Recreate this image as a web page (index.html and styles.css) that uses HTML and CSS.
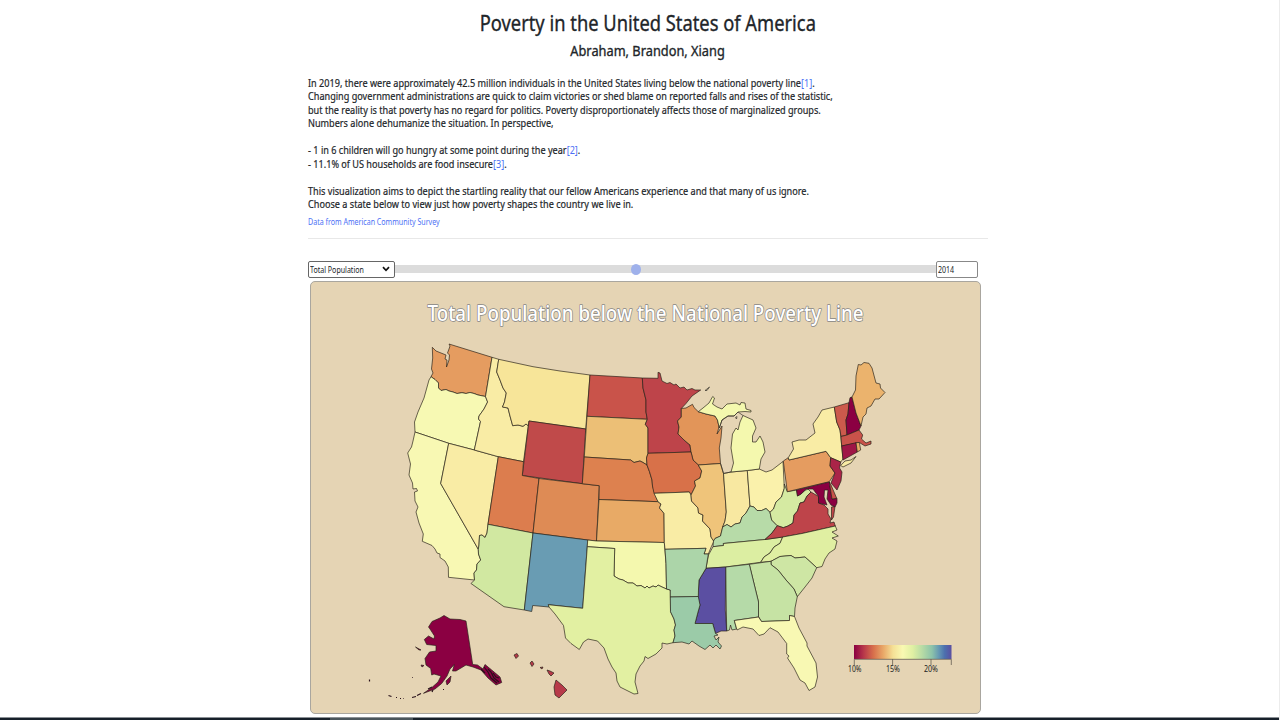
FILE: index.html
```html
<!DOCTYPE html>
<html lang="en">
<head>
<meta charset="utf-8">
<title>Poverty in the United States of America</title>
<link rel="stylesheet" href="styles.css">
</head>
<body>
<main class="page">
  <h1 class="title">Poverty in the United States of America</h1>
  <h2 class="authors">Abraham, Brandon, Xiang</h2>
  <div class="intro">In 2019, there were approximately 42.5 million individuals in the United States living below the national poverty line<a>[1]</a>.<br>Changing government administrations are quick to claim victories or shed blame on reported falls and rises of the statistic,<br>but the reality is that poverty has no regard for politics. Poverty disproportionately affects those of marginalized groups.<br>Numbers alone dehumanize the situation. In perspective,<br><br>- 1 in 6 children will go hungry at some point during the year<a>[2]</a>.<br>- 11.1% of US households are food insecure<a>[3]</a>.<br><br>This visualization aims to depict the startling reality that our fellow Americans experience and that many of us ignore.<br>Choose a state below to view just how poverty shapes the country we live in.</div>
  <a class="source">Data from American Community Survey</a>
  <hr class="rule">
  <div class="controls">
    <div class="select"><span class="small-text">Total Population</span><svg class="chevron" viewBox="0 0 8 6"><path d="M1 1.2 4 4.3 7 1.2"/></svg></div>
    <div class="slider"><span class="thumb"></span></div>
    <div class="year"><span class="small-text">2014</span></div>
  </div>
  <section class="map-card">
    <svg class="map" viewBox="311 282 669 431">
      <defs>
        <linearGradient id="ramp"><stop offset="0" stop-color="#8b0042"/><stop offset=".1" stop-color="#b8384a"/><stop offset=".2" stop-color="#d8704c"/><stop offset=".3" stop-color="#e9a868"/><stop offset=".4" stop-color="#f5e096"/><stop offset=".5" stop-color="#f9f9b2"/><stop offset=".6" stop-color="#e0f0a3"/><stop offset=".7" stop-color="#b7dba5"/><stop offset=".8" stop-color="#8cc3aa"/><stop offset=".87" stop-color="#6699b3"/><stop offset=".93" stop-color="#4c70ae"/><stop offset="1" stop-color="#5b4fa2"/></linearGradient>
      </defs>
      <text class="map-title" x="427.5" y="320.5" textLength="436" lengthAdjust="spacingAndGlyphs">Total Population below the National Poverty Line</text>
      <g class="states">
        <path id="WA" fill="#e59c60" d="M432.3 347.3 436 351 441 353 446 355 445 359 447 360 446.500 367 449 360 449.500 355 447.500 353 449 349 450 346 449 344 492 357.300 485.500 396.500 478 395 474 393.500 470 392.500 466 393.500 462 392.700 457 393.500 453 392 449 391 446 389.500 441 390.500 438.500 388 438.500 383 435 379.500 431 376.700 433 373 431.500 369 432.700 358Z"/>
        <path id="OR" fill="#f7f9b3" d="M431 376.700 435 379.500 438.500 383 438.500 388 441 390.500 446 389.500 449 391 453 392 457 393.500 462 392.700 466 393.500 470 392.500 474 393.500 478 395 485.500 396.500 487.600 402 484 409 479 416 478.500 419 480.500 421.500 474.300 450 448.700 443.300 415 432 414.500 422 418 412 424 398 429 380Z"/>
        <path id="CA" fill="#f8f8b3" d="M415 432 448.700 443.300 440.700 483.500 478.300 549.300 478.500 554 480.700 560 477 564 476.500 570 474 573 474.500 580 448.500 577.300 448.300 567 445 561 440 557.500 440 554 437 553 435 549 432 545.500 422.300 541.300 423.300 534 419 523 416 512 418 507 415 501 414.500 492 417.500 491 416.500 488.500 413 489 412.500 483 409 475 410.500 464 407.700 453 411.500 447 413 441Z"/>
        <path id="NV" fill="#f9eca5" d="M448.700 443.300 474.300 450 498.300 456.700 488 524.300 487 533 485 537.500 482 535 479.500 535.500 479 545 478.300 549.300 440.700 483.500Z"/>
        <path id="ID" fill="#f9eca5" d="M492 357.300 498.700 359.300 496.700 372 500 380 503 388 506.300 393 504.500 402 502.500 407 508 408 510 416 512.700 425.700 518 425 523 426.300 526 424 528.300 425.700 523.500 461.700 498.300 456.700 474.300 450 480.500 421.500 478.500 419 479 416 484 409 487.600 402 485.500 396.500Z"/>
        <path id="MT" fill="#f7e599" d="M498.700 359.300 533 366.700 560 371 590 375 585.700 429 529 421 528.300 425.700 526 424 523 426.300 518 425 512.700 425.700 510 416 508 408 502.500 407 504.500 402 506.300 393 503 388 500 380 496.700 372Z"/>
        <path id="WY" fill="#c04a4a" d="M529 421 585.700 429 582.300 483.700 522.300 475.500Z"/>
        <path id="UT" fill="#dc7d4e" d="M498.300 456.700 523.500 461.700 522.300 475.500 539 478.500 533 533 488 524.300Z"/>
        <path id="CO" fill="#de8b55" d="M539 478.500 582.300 483.700 599.300 485.700 596.500 541 587.700 540 533 533Z"/>
        <path id="AZ" fill="#d1e8a1" d="M488 524.300 533 533 524.300 610 504 606.700 471 583.500 474.500 580 474 573 476.500 570 477 564 480.700 560 478.500 554 478.300 549.300 479 545 479.500 535.500 482 535 485 537.500 487 533Z"/>
        <path id="NM" fill="#699cb3" d="M533 533 587.700 540 582.700 608.300 548.300 604.700 549 607 532.700 605.500 531.700 611.500 524.300 610Z"/>
        <path id="ND" fill="#c9534a" d="M590 375 642.300 378 643 388 646 400 646 412 647.300 419.300 587 416.300Z"/>
        <path id="SD" fill="#ecbf76" d="M587 416.300 647.300 419.300 645.300 424.300 648 428 648 453.300 646.500 458 647 465 643 462.500 640 461 634 462.500 630.700 460 584.300 457Z"/>
        <path id="NE" fill="#dd814f" d="M584.300 457 630.700 460 634 462.500 640 461 643 462.500 647 465 649.500 471.700 652 480 652.500 486 655 494 658 501.700 599 499.500 599.300 485.700 582.300 483.700Z"/>
        <path id="KS" fill="#e8aa66" d="M599 499.500 658 501.700 661 504 659.500 508 664 513.300 664.300 542.500 596.500 541Z"/>
        <path id="OK" fill="#f4f8ae" d="M587.700 540 596.500 541 664.300 542.500 666 563.500 666.500 589 662 587 658 585 656 587 653 586 649 588 647 586 645 588 641 585.500 637 586 633 583 628 583 623 580 619 579 614 576 614.700 548.500 587.300 546.700Z"/>
        <path id="TX" fill="#e2f0a2" d="M587.300 546.700 614.700 548.500 614 576 619 579 623 580 628 583 633 583 637 586 641 585.500 645 588 647 586 649 588 653 586 656 587 658 585 662 587 666.500 589 670.300 590 670.500 611.700 674 619 675.500 625 674 630 675 636 673 642.700 667 644 662 643 662 648 656 654 648 658.500 645 656.500 644 661 640 666 636 674 635 682 638 693.500 634 694 628 691 620 687 617 681 616 673 612 667 608 659 604 648 597.500 641 588 639 583.500 642 579.300 649.500 571 643.500 565.500 638 563.500 625.500 555 614 549 607 548.300 604.700 582.700 608.300Z"/>
        <path id="MN" fill="#be444a" d="M642.300 378 658 378.300 658 372.300 660 373 662 381 667 383.500 670 382.500 674 385 676 384 680 388 684 387 687 390 692 388.500 695 390 700.700 390 692 396 686 403.500 681.300 408.500 681.300 417 677.500 421 679 427 678 434 684 440 690 445 691 452 648 453.300 648 428 645.300 424.300 647.300 419.300 646 412 646 400 643 388Z"/>
        <path id="WI" fill="#e29559" d="M681.300 408.500 686 408 692.500 404.300 694 407.500 698.300 411.700 706 414 715 416 717.500 420 719 427 717 434 722 426 721 438 719.300 448 720.500 463.500 698.300 465 693 460 691 452 690 445 684 440 678 434 679 427 677.500 421 681.300 417Z"/>
        <path id="IA" fill="#d87149" d="M648 453.300 691 452 693 460 698.300 465 701.700 471 700 478 694.500 481 695.500 486 693 491 691 495 689.300 492 654 493.300 652.500 486 652 480 649.500 471.700 647 465 646.500 458Z"/>
        <path id="MO" fill="#f9eca5" d="M654 493.300 689.300 492 691 495 691.500 501 698 508 698.500 513 703 515 702.500 521 710 529 711 537 714 541 711.300 546.700 708.300 554 704 554 706 548.300 665 549.300 664.300 542.500 664 513.300 659.500 508 661 504 658 501.700Z"/>
        <path id="IL" fill="#efc47a" d="M698.300 465 720.500 463.500 723.500 473.500 726.300 512 725 521 722.700 527 720.500 536 715 538.500 713.500 541 711 537 710 529 702.500 521 703 515 698.500 513 698 508 691.500 501 691 495 693 491 695.500 486 694.500 481 700 478 701.700 471Z"/>
        <path id="IN" fill="#f8e8a1" d="M723.500 473.500 731 472 747.300 470.500 750 506 746 513 742 517 740 523 735 524 731 527 727 524.500 722.700 527 725 521 726.300 512Z"/>
        <path id="OH" fill="#faf1ab" d="M747.300 470.500 759.300 469 766 472 772 470 783 461.500 784.300 488.300 781.500 497 776 502 773.500 509 770 512.300 766 508.500 761.700 510.500 757 510.500 754 507 750 506Z"/>
        <path id="KY" fill="#b7dba8" d="M750 506 754 507 757 510.500 761.700 510.500 766 508.500 770 512.300 771.700 520 777.300 525.700 772 533 765 539.500 723.300 543.500 723.500 545.500 713 546.700 713.500 541 715 538.500 720.500 536 722.700 527 727 524.500 731 527 735 524 740 523 742 517 746 513Z"/>
        <path id="TN" fill="#dceea2" d="M713 546.700 723.500 545.500 723.300 543.500 765 539.500 782.700 537 780 543.300 774 547 770 553 764 557 760.700 562.300 725.700 567 706 568.300 708.500 555Z"/>
        <path id="WV" fill="#d5eaa2" d="M784.300 484 787.300 491.700 796.500 490 797.500 496 801 494 805 490.500 808 489 811 492 807 496 804 502 800 503 797.500 511 794 515 793 523 788 526 783.300 527.700 777.300 525.700 771.700 520 770 512.300 773.500 509 776 502 781.500 497 784.300 488.300Z"/>
        <path id="VA" fill="#be444a" d="M811 492 818.500 496.500 818.500 503 824 505 828 509 828 514 831 519 830 523 834 522 835.300 526 802 533.500 782.700 537 765 539.500 772 533 777.300 525.700 783.300 527.700 788 526 793 523 794 515 797.500 511 800 503 804 502 807 496ZM831.500 507 835 506.500 833.500 517 831.500 520Z"/>
        <path id="NC" fill="#e0efa2" d="M782.700 537 802 533.500 835.300 526 837 530 832 532 838.300 536 832 538 837 541 835 549 829 553 825 559 822 566.500 816.700 567.700 805 557 795 558 791 555.500 780 556.500 771 561.300 760.700 562.300 764 557 770 553 774 547 780 543.300Z"/>
        <path id="SC" fill="#cee6a4" d="M771 561.300 780 556.500 791 555.500 795 558 805 557 816.700 567.700 812 578 805 587 797.300 596.700 794 589 786 580 778 570 771 564.500Z"/>
        <path id="GA" fill="#c6e3a4" d="M749.300 564.300 771 561.300 771 564.500 778 570 786 580 794 589 797.300 596.700 795 608 794.500 616.500 789.500 615.500 789.500 620.500 761.500 621.500 758.500 616.500 758.500 602Z"/>
        <path id="AL" fill="#b5daa8" d="M725.700 567 749.300 564.300 758.500 602 758.500 617 734.300 620.500 736.500 629 732 630 730.500 625 729.500 630 726.700 631Z"/>
        <path id="MS" fill="#5b4fa2" d="M706 568.300 725.700 567 725.300 610 726.700 631 721 631 715.500 633.500 712.700 623.500 695 623.500 698 612 700 605 698 598 698.500 589 699 580Z"/>
        <path id="AR" fill="#acd5a9" d="M665 549.300 706 548.300 704 554 708.300 554 706 568.300 699 580 698.500 589 698.300 596.500 670.300 597 670.300 590 666.500 589 666 563.500Z"/>
        <path id="LA" fill="#9bcba8" d="M670.300 597 698.300 596.500 700 605 698 612 695 623.500 712.700 623.500 715.500 633.500 718 635 714 636 716 640 719 637 718 642 721.500 646 720 649 716 645 713 648 710 645 705 649.500 699 646 692 641 689 644 682 642 673 642.700 675 636 674 630 675.500 625 674 619 670.500 611.700Z"/>
        <path id="FL" fill="#f8f8b3" d="M734.300 620.500 758.500 617 761.500 621.500 789.500 620.500 789.500 615.500 794.500 616.500 799 628 807 643 807 646 816 663 817.500 677 815 687 809 690.500 805 683 800 680 795 670 794 668 787.500 658 789 656 786.700 654 786.700 643.500 778 632 770 627.700 764 634 759 635.500 753 629 743 627 737 630Z"/>
        <path id="MI" fill="#f4f8ae" d="M731 472 733.500 463 731 448 732.500 434 736 428 738 430 740 422 743 415.500 753 420 756 428 752.500 436 752.500 442 756 442 760 436 763 442 765 452 761 459 759.300 469 747.300 470.500ZM698.300 411.700 703 408 709 403 712.700 396.500 714.500 398 712.500 404 717 407 722 409 727 404 736 403 740 405 741 402.500 745 403 746 409 751 410.500 751 412 745 411.500 738 412 734 416 728 416 722 420 719.300 428 717.500 420 715 416 706 414Z"/>
        <path id="PA" fill="#e59c60" d="M783.300 461 788.300 457.700 789 460 826 451.300 830.700 457.700 830 466 835 473 829.300 481.700 787.300 491.700Z"/>
        <path id="NY" fill="#f9eca5" d="M788.300 457.700 793.500 449 792 442 799 440 806 440 815 433 813 424 818 417 822 410 834.300 407 836.700 422 840 430 841.700 446 843 459 840.700 462 830.700 457.700 826 451.300 789 460ZM840.700 465.500 845 461 851 460 856 456.500 851 463 843 467Z"/>
        <path id="VT" fill="#cc5a4c" d="M834.300 407 849 402.700 848 414 846 420 847 435 841 436.500 840 430 836.700 422Z"/>
        <path id="NH" fill="#8b0042" d="M849 402.700 850 397.700 852 397 856 413 861 426 859 430 847 435 846 420 848 414Z"/>
        <path id="ME" fill="#ebb36d" d="M852 397 855.500 390 856 376 858.300 364.500 861 365 864 362.500 869 363.300 872 368 876 383 880 384 880.500 388 885 392.500 879 399 875 399 871 406 867 408 866 414 863 417 861 426 856 413Z"/>
        <path id="MA" fill="#c9534a" d="M841 436.500 847 435 859 430 862.700 435 861.500 439 866 443 871 441 871 444 865 446 859.300 442.500 841.700 446Z"/>
        <path id="CT" fill="#9f1646" d="M841.700 446 856 442.700 857.300 452 843 460Z"/>
        <path id="RI" fill="#e9ac66" d="M856 442.700 859.300 442.500 860.700 450 857.300 452Z"/>
        <path id="NJ" fill="#aa2448" d="M830.700 457.700 840.700 462 839.500 468 842 472 841 481 837 490 831 483 835 473 830 466Z"/>
        <path id="MD" fill="#8b0042" d="M796.500 490 829.300 482 832 499 837 498.300 837 503 835 507 831 505 827 499 828 490 824.500 490 824 497 827 505 818.500 503 818.500 496.500 813 489 806 489 801 494 797.500 496Z"/>
        <path id="DE" fill="#c9534a" d="M829.300 482 831 485 836.700 498.300 832 499Z"/>
        <path id="AK" fill="#8b0042" d="M428.500 627 432 621.500 440 618 444 615.500 450 619 460 619.500 466 621 472.700 664.500 477.500 665 483 669 485 664.500 491.700 670 500 677 501.700 682.500 496 685 488 678 481 670 473 667 466 665 461 668 456 671 452.500 671 454.300 664.500 450 669 447 676 441.700 683.500 435 689 423.500 693.300 431.700 687.700 438 682 441 676 434 674 431.700 675 430.700 668.500 426 665 425 658.500 429.500 652 436 651 436 645.500 426.700 644.500 424.300 639.500 428.500 636 434 639 434.500 636 430 629ZM446 681 451 676 450 682 447 685ZM415.500 647 421 650 419 650ZM421 665 424 665.500 422 667Z"/>
        <path id="HI" fill="#b73a49" d="M514 655 517 653.500 518.500 656 516 658.500ZM530 663 532 661 534 664 532 666.500ZM540 667.500 543 667 542 669ZM547 670 550 671 554 673 551 676 549 674ZM556 680 562 685 567 690 559 698 555 695 554 687Z"/>
      </g>
      <path class="islands" d="M369.500 679.500v2M412 677.500h.7M388.500 695.500l3 1M396 697.500h1M400 698.500h1M403 698.500h.6M412 697.500l4-1M417 695.500l4-2M443 689.500h1M428 689l4-2M432 692l1-2M484 667l4 5 3 6 6 5M488 669l3 3 3 6 5 4M493 673l3 4 3 1M481 669l4 4"/>
      <path class="shore" d="M705 390.500 709.500 387 707 390.500ZM735.500 417.500 737 416.500 736.500 419ZM720.500 463.500 723.500 473.500 731 472M719.300 428 722 420 728 416 734 416 738 412M738 412 743 415.500"/>
      <rect x="854" y="645" width="97.500" height="14" fill="url(#ramp)"/>
      <path class="axis" d="M854.300 665v-5.700h97v5.700M892.600 659v6M931 659v6"/>
      <g class="ticks"><text x="848" y="671.500" textLength="13.500" lengthAdjust="spacingAndGlyphs">10%</text><text x="886" y="671.500" textLength="14" lengthAdjust="spacingAndGlyphs">15%</text><text x="924" y="671.500" textLength="14" lengthAdjust="spacingAndGlyphs">20%</text></g>
    </svg>
  </section>
</main>
<div class="taskbar"><span class="task"></span></div>
</body>
</html>
```
FILE: styles.css
```css
* { box-sizing: border-box; }
body {
  margin: 0;
  height: 720px;
  overflow: hidden;
  display: flex;
  flex-direction: column;
  justify-content: space-between;
  background: #fff;
  border-right: 1px solid #ececec;
  color: #212529;
  font-family: "Noto Sans", "Open Sans", sans-serif;
}
.page {
  width: 680px;
  margin-left: 308px;
  display: flex;
  flex-direction: column;
  align-items: flex-start;
}
.title, .authors {
  margin: 0;
  align-self: center;
  font-weight: 400;
  white-space: nowrap;
  -webkit-text-stroke: .35px #212529;
}
.title { margin-top: 8px; font-size: 22px; line-height: 29px; transform: scaleX(.833); }
.authors { margin-top: 4px; font-size: 15px; line-height: 18px; transform: scaleX(.853); }
.intro {
  margin-top: 18px;
  font-size: 10.6px;
  line-height: 13.45px;
  white-space: nowrap;
  transform: scaleX(.86);
  transform-origin: 0 0;
  -webkit-text-stroke: .2px currentColor;
}
a { color: #4b70f5; }
.intro a { -webkit-text-stroke: 0; }
.source {
  margin-top: 4px;
  font-size: 8.6px;
  line-height: 13px;
  transform: scaleX(.823);
  transform-origin: 0 0;
}
.rule { width: 680px; height: 1px; margin: 9px 0 0; border: 0; background: #e8e8e8; }
.controls { display: flex; align-items: center; width: 670px; height: 17px; margin-top: 22px; }
.select {
  display: flex;
  align-items: center;
  justify-content: space-between;
  width: 87px;
  height: 17px;
  padding: 0 4px 0 1px;
  border: 1px solid #666;
  border-radius: 2px;
  background: #fff;
}
.small-text {
  font-size: 8.5px;
  line-height: 13px;
  white-space: nowrap;
  transform: scaleX(.83);
  transform-origin: 0 50%;
}
.select .small-text { width: 60px; }
.chevron { width: 8px; height: 6px; fill: none; stroke: #111; stroke-width: 1.7; }
.slider { display: flex; justify-content: center; align-items: center; width: 541px; height: 8px; background: #dcdcdc; padding-right: 60px; }
.thumb { width: 10px; height: 11px; flex: none; border-radius: 50%; background: #9fb1eb; }
.year { display: flex; align-items: center; width: 42px; height: 17px; padding-left: 1px; border: 1px solid #888; border-radius: 2px; background: #fff; }
.map-card {
  width: 671px;
  height: 433px;
  margin: 3px 0 0 2px;
  overflow: hidden;
  border: 1px solid #a9a69f;
  border-radius: 5px;
  background: #e5d4b4;
}
.map { display: block; width: 669px; height: 431px; }
.map-title { font-size: 21.5px; font-weight: 500; fill: #fff; stroke: #858585; stroke-width: 1.5; stroke-linejoin: round; paint-order: stroke; }
.states path { stroke: #272018; stroke-opacity: .85; stroke-width: .8; stroke-linejoin: round; }
.islands { fill: none; stroke: #28101a; stroke-width: 1.2; }
.shore { fill: none; stroke: #3a352c; stroke-width: .7; }
.axis { fill: none; stroke: #665f52; stroke-width: .8; }
.ticks { font-size: 8px; fill: #222; }
.taskbar { width: 1280px; height: 3px; padding-left: 330px; border-top: 1px solid #8b9095; background: #17202a; }
.task { display: block; width: 83px; height: 2px; background: #4a555c; }
```
